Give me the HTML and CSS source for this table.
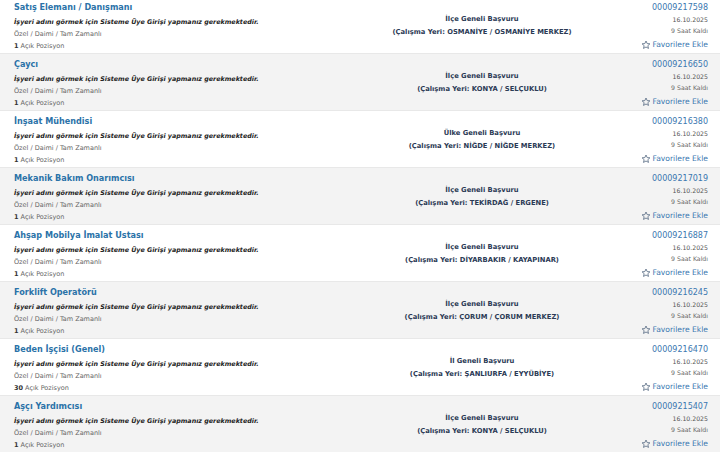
FILE: index.html
```html
<!DOCTYPE html>
<html lang="tr">
<head>
<meta charset="utf-8">
<link rel="stylesheet" href="styles.css">
</head>
<body>
<div class="list">
  <div class="row first">
    <div class="left">
      <div class="title">Satış Elemanı / Danışmanı</div>
      <div class="note">İşyeri adını görmek için Sisteme Üye Girişi yapmanız gerekmektedir.</div>
      <div class="meta">Özel / Daimi / Tam Zamanlı</div>
      <div class="meta"><b>1</b> Açık Pozisyon</div>
    </div>
    <div class="mid">
      <div>İlçe Geneli Başvuru</div>
      <div>(Çalışma Yeri: OSMANİYE / OSMANİYE MERKEZ)</div>
    </div>
    <div class="right">
      <div class="num">00009217598</div>
      <div class="date">16.10.2025</div>
      <div class="left-time">9 Saat Kaldı</div>
      <div class="fav"><svg viewBox="0 0 12 12"><path d="M6 1.2 7.4 4.3 10.7 4.6 8.2 6.8 9 10.1 6 8.4 3 10.1 3.8 6.8 1.3 4.6 4.6 4.3Z"/></svg>Favorilere Ekle</div>
    </div>
  </div>
  <div class="row alt">
    <div class="left">
      <div class="title">Çaycı</div>
      <div class="note">İşyeri adını görmek için Sisteme Üye Girişi yapmanız gerekmektedir.</div>
      <div class="meta">Özel / Daimi / Tam Zamanlı</div>
      <div class="meta"><b>1</b> Açık Pozisyon</div>
    </div>
    <div class="mid">
      <div>İlçe Geneli Başvuru</div>
      <div>(Çalışma Yeri: KONYA / SELÇUKLU)</div>
    </div>
    <div class="right">
      <div class="num">00009216650</div>
      <div class="date">16.10.2025</div>
      <div class="left-time">9 Saat Kaldı</div>
      <div class="fav"><svg viewBox="0 0 12 12"><path d="M6 1.2 7.4 4.3 10.7 4.6 8.2 6.8 9 10.1 6 8.4 3 10.1 3.8 6.8 1.3 4.6 4.6 4.3Z"/></svg>Favorilere Ekle</div>
    </div>
  </div>
  <div class="row">
    <div class="left">
      <div class="title">İnşaat Mühendisi</div>
      <div class="note">İşyeri adını görmek için Sisteme Üye Girişi yapmanız gerekmektedir.</div>
      <div class="meta">Özel / Daimi / Tam Zamanlı</div>
      <div class="meta"><b>1</b> Açık Pozisyon</div>
    </div>
    <div class="mid">
      <div>Ülke Geneli Başvuru</div>
      <div>(Çalışma Yeri: NİĞDE / NİĞDE MERKEZ)</div>
    </div>
    <div class="right">
      <div class="num">00009216380</div>
      <div class="date">16.10.2025</div>
      <div class="left-time">9 Saat Kaldı</div>
      <div class="fav"><svg viewBox="0 0 12 12"><path d="M6 1.2 7.4 4.3 10.7 4.6 8.2 6.8 9 10.1 6 8.4 3 10.1 3.8 6.8 1.3 4.6 4.6 4.3Z"/></svg>Favorilere Ekle</div>
    </div>
  </div>
  <div class="row alt">
    <div class="left">
      <div class="title">Mekanik Bakım Onarımcısı</div>
      <div class="note">İşyeri adını görmek için Sisteme Üye Girişi yapmanız gerekmektedir.</div>
      <div class="meta">Özel / Daimi / Tam Zamanlı</div>
      <div class="meta"><b>1</b> Açık Pozisyon</div>
    </div>
    <div class="mid">
      <div>İlçe Geneli Başvuru</div>
      <div>(Çalışma Yeri: TEKİRDAĞ / ERGENE)</div>
    </div>
    <div class="right">
      <div class="num">00009217019</div>
      <div class="date">16.10.2025</div>
      <div class="left-time">9 Saat Kaldı</div>
      <div class="fav"><svg viewBox="0 0 12 12"><path d="M6 1.2 7.4 4.3 10.7 4.6 8.2 6.8 9 10.1 6 8.4 3 10.1 3.8 6.8 1.3 4.6 4.6 4.3Z"/></svg>Favorilere Ekle</div>
    </div>
  </div>
  <div class="row">
    <div class="left">
      <div class="title">Ahşap Mobilya İmalat Ustası</div>
      <div class="note">İşyeri adını görmek için Sisteme Üye Girişi yapmanız gerekmektedir.</div>
      <div class="meta">Özel / Daimi / Tam Zamanlı</div>
      <div class="meta"><b>1</b> Açık Pozisyon</div>
    </div>
    <div class="mid">
      <div>İlçe Geneli Başvuru</div>
      <div>(Çalışma Yeri: DİYARBAKIR / KAYAPINAR)</div>
    </div>
    <div class="right">
      <div class="num">00009216887</div>
      <div class="date">16.10.2025</div>
      <div class="left-time">9 Saat Kaldı</div>
      <div class="fav"><svg viewBox="0 0 12 12"><path d="M6 1.2 7.4 4.3 10.7 4.6 8.2 6.8 9 10.1 6 8.4 3 10.1 3.8 6.8 1.3 4.6 4.6 4.3Z"/></svg>Favorilere Ekle</div>
    </div>
  </div>
  <div class="row alt">
    <div class="left">
      <div class="title">Forklift Operatörü</div>
      <div class="note">İşyeri adını görmek için Sisteme Üye Girişi yapmanız gerekmektedir.</div>
      <div class="meta">Özel / Daimi / Tam Zamanlı</div>
      <div class="meta"><b>1</b> Açık Pozisyon</div>
    </div>
    <div class="mid">
      <div>İlçe Geneli Başvuru</div>
      <div>(Çalışma Yeri: ÇORUM / ÇORUM MERKEZ)</div>
    </div>
    <div class="right">
      <div class="num">00009216245</div>
      <div class="date">16.10.2025</div>
      <div class="left-time">9 Saat Kaldı</div>
      <div class="fav"><svg viewBox="0 0 12 12"><path d="M6 1.2 7.4 4.3 10.7 4.6 8.2 6.8 9 10.1 6 8.4 3 10.1 3.8 6.8 1.3 4.6 4.6 4.3Z"/></svg>Favorilere Ekle</div>
    </div>
  </div>
  <div class="row">
    <div class="left">
      <div class="title">Beden İşçisi (Genel)</div>
      <div class="note">İşyeri adını görmek için Sisteme Üye Girişi yapmanız gerekmektedir.</div>
      <div class="meta">Özel / Daimi / Tam Zamanlı</div>
      <div class="meta"><b>30</b> Açık Pozisyon</div>
    </div>
    <div class="mid">
      <div>İl Geneli Başvuru</div>
      <div>(Çalışma Yeri: ŞANLIURFA / EYYÜBİYE)</div>
    </div>
    <div class="right">
      <div class="num">00009216470</div>
      <div class="date">16.10.2025</div>
      <div class="left-time">9 Saat Kaldı</div>
      <div class="fav"><svg viewBox="0 0 12 12"><path d="M6 1.2 7.4 4.3 10.7 4.6 8.2 6.8 9 10.1 6 8.4 3 10.1 3.8 6.8 1.3 4.6 4.6 4.3Z"/></svg>Favorilere Ekle</div>
    </div>
  </div>
  <div class="row alt">
    <div class="left">
      <div class="title">Aşçı Yardımcısı</div>
      <div class="note">İşyeri adını görmek için Sisteme Üye Girişi yapmanız gerekmektedir.</div>
      <div class="meta">Özel / Daimi / Tam Zamanlı</div>
      <div class="meta"><b>1</b> Açık Pozisyon</div>
    </div>
    <div class="mid">
      <div>İlçe Geneli Başvuru</div>
      <div>(Çalışma Yeri: KONYA / SELÇUKLU)</div>
    </div>
    <div class="right">
      <div class="num">00009215407</div>
      <div class="date">16.10.2025</div>
      <div class="left-time">9 Saat Kaldı</div>
      <div class="fav"><svg viewBox="0 0 12 12"><path d="M6 1.2 7.4 4.3 10.7 4.6 8.2 6.8 9 10.1 6 8.4 3 10.1 3.8 6.8 1.3 4.6 4.6 4.3Z"/></svg>Favorilere Ekle</div>
    </div>
  </div>
</div>
</body>
</html>
```
FILE: styles.css
```css
html, body {
  margin: 0;
  padding: 0;
  background: #ffffff;
  overflow: hidden;
}
body {
  font-family: "DejaVu Sans", Verdana, sans-serif;
  color: #333;
}
.list {
  display: flex;
  flex-direction: column;
}
.row {
  display: grid;
  grid-template-columns: 368px 200px 1fr;
  height: 56px;
  border-bottom: 1px solid #e8e8e8;
  padding: 0 12px 0 14px;
  background: #ffffff;
}
.row.first {
  margin-top: -3px;
}
.row.alt {
  background: #f3f3f3;
}
.left {
  padding-top: 3px;
}
.title {
  font-size: 8.1px;
  font-weight: bold;
  color: #2a72a8;
  line-height: 15px;
  white-space: nowrap;
}
.note {
  font-size: 6.35px;
  font-weight: bold;
  font-style: italic;
  color: #222;
  line-height: 13px;
  white-space: nowrap;
}
.meta {
  font-size: 6.5px;
  color: #666;
  line-height: 12px;
  white-space: nowrap;
}
.meta b {
  color: #333;
}
.mid {
  padding-top: 16px;
  text-align: center;
  font-size: 6.75px;
  font-weight: bold;
  color: #2b3a55;
  line-height: 13px;
  white-space: nowrap;
}
.right {
  padding-top: 5px;
  text-align: right;
  white-space: nowrap;
}
.num {
  font-size: 8px;
  color: #3a77b0;
  line-height: 12px;
}
.date {
  font-size: 6.2px;
  color: #555;
  line-height: 11px;
}
.left-time {
  font-size: 6.2px;
  color: #666;
  line-height: 12px;
}
.fav {
  font-size: 7.6px;
  color: #3a77b0;
  line-height: 16px;
  display: flex;
  justify-content: flex-end;
  align-items: center;
  gap: 2px;
}
.fav svg {
  width: 10px;
  height: 10px;
  fill: none;
  stroke: #5a6e86;
  stroke-width: 1;
  stroke-linejoin: round;
}
```
